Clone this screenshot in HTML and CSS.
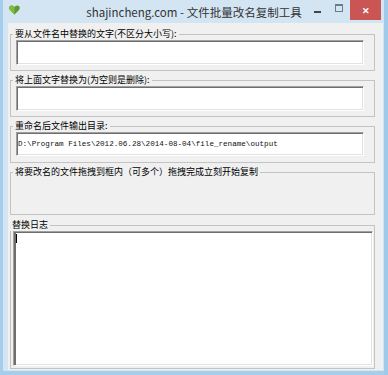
FILE: index.html
```html
<!DOCTYPE html>
<html lang="zh-CN">
<head>
    <meta charset="UTF-8">
    <title>shajincheng.com - 文件批量改名复制工具</title>
    <link rel="stylesheet" href="styles.css">
</head>
<body>
    <div class="window">
        <div class="titlebar">
            <div class="title-left">
                <svg class="app-icon" width="11" height="10" viewBox="0 0 11 10">
                    <path d="M5.5 9.5 L1 5 C-0.5 3.3 0.3 0.6 2.6 0.5 C3.9 0.4 4.9 1.2 5.5 2.2 C6.1 1.2 7.1 0.4 8.4 0.5 C10.7 0.6 11.5 3.3 10 5 Z" fill="#5c9a2c"/>
                    <path d="M5.5 9.5 L1 5 C-0.5 3.3 0.3 0.6 2.6 0.5 C3.9 0.4 4.9 1.2 5.5 2.2 Z" fill="#7fbb3d"/>
                </svg>
            </div>
            <div class="title">shajincheng.com - 文件批量改名复制工具</div>
            <div class="caption-buttons">
                <span class="btn btn-min"><i></i></span>
                <span class="btn btn-max"><i></i></span>
                <span class="btn btn-close">✕</span>
            </div>
        </div>

        <div class="client">
            <fieldset class="group">
                <legend>要从文件名中替换的文字(不区分大小写):</legend>
                <div class="textbox"></div>
            </fieldset>

            <fieldset class="group">
                <legend>将上面文字替换为(为空则是删除):</legend>
                <div class="textbox"></div>
            </fieldset>

            <fieldset class="group output">
                <legend>重命名后文件输出目录:</legend>
                <div class="textbox path">D:\Program Files\2012.06.28\2014-08-04\file_rename\output</div>
            </fieldset>

            <fieldset class="group drop">
                <legend>将要改名的文件拖拽到框内（可多个）拖拽完成立刻开始复制</legend>
            </fieldset>

            <fieldset class="group log">
                <legend>替换日志</legend>
                <div class="textbox log-box"><span class="caret"></span></div>
            </fieldset>
        </div>
    </div>
</body>
</html>
```

FILE: styles.css
```css
body {
    margin: 0;
    padding: 0;
    width: 388px;
    height: 375px;
    overflow: hidden;
    font-family: "Noto Sans CJK SC", "Noto Sans", sans-serif;
    color: #000;
}
.window {
    height: 375px;
    display: flex;
    flex-direction: column;
    background: #d3e5f3;
    box-shadow: inset 3px 0 #a5cdec, inset -4px 0 #9fcaea, inset 0 -4px #a5cdec;
}
.titlebar {
    height: 23px;
    flex: none;
    display: grid;
    grid-template-columns: 1fr auto 1fr;
    align-items: start;
}
.title-left {
    padding: 5px 0 0 9px;
}
.app-icon {
    display: block;
}
.title {
    font-size: 11.5px;
    line-height: 24px;
    color: #333;
}
.caption-buttons {
    justify-self: end;
    display: flex;
    margin-right: 7px;
}
.btn {
    height: 20px;
    display: flex;
    align-items: center;
    justify-content: center;
}
.btn-min {
    width: 22px;
}
.btn-min i {
    width: 7px;
    height: 2px;
    background: #444;
    margin-top: 4px;
}
.btn-max {
    width: 22px;
}
.btn-max i {
    width: 6px;
    height: 5px;
    border: 1px solid #6a7a88;
    border-top-width: 2px;
    margin-top: -5px;
}
.btn-close {
    width: 31px;
    background: #c95555;
    color: #fff;
    font-size: 9px;
    font-weight: bold;
}
.client {
    flex: 1;
    margin: 0 5px 5px 8px;
    background: #f0f0f0;
    padding: 5px 8px 1px 2px;
    display: flex;
    flex-direction: column;
    gap: 3px;
}
.group {
    margin: 0;
    padding: 0 10px 5px 5px;
    border: 1px solid #c3c3c3;
    min-width: 0;
}
.group legend {
    font-size: 9px;
    line-height: 12px;
    padding: 0 2px;
    margin-left: -3px;
    white-space: nowrap;
}
.textbox {
    height: 25px;
    box-sizing: border-box;
    background: #fff;
    border: 1px solid;
    border-color: #a0a0a0 #fff #fff #a0a0a0;
    box-shadow: inset 1px 1px #6e6e6e, inset -1px -1px #e3e3e3;
}
.output {
    padding-bottom: 6px;
}
.path {
    height: 24px;
    font-family: "Liberation Mono", monospace;
    font-size: 7.6px;
    line-height: 22px;
    padding-left: 1px;
    white-space: nowrap;
    overflow: hidden;
    color: #111;
}
.drop {
    height: 49px;
    box-sizing: border-box;
}
.log {
    flex: 1;
    display: flex;
    flex-direction: column;
    margin-top: 1px;
    padding: 0 1px 2px 2px;
}
.log-box {
    flex: 1;
    box-shadow: inset 2px 1px #6e6e6e, inset -1px -1px #e3e3e3;
}
.caret {
    display: block;
    width: 1px;
    height: 9px;
    margin: 2px 0 0 2px;
    background: #000;
}
```
